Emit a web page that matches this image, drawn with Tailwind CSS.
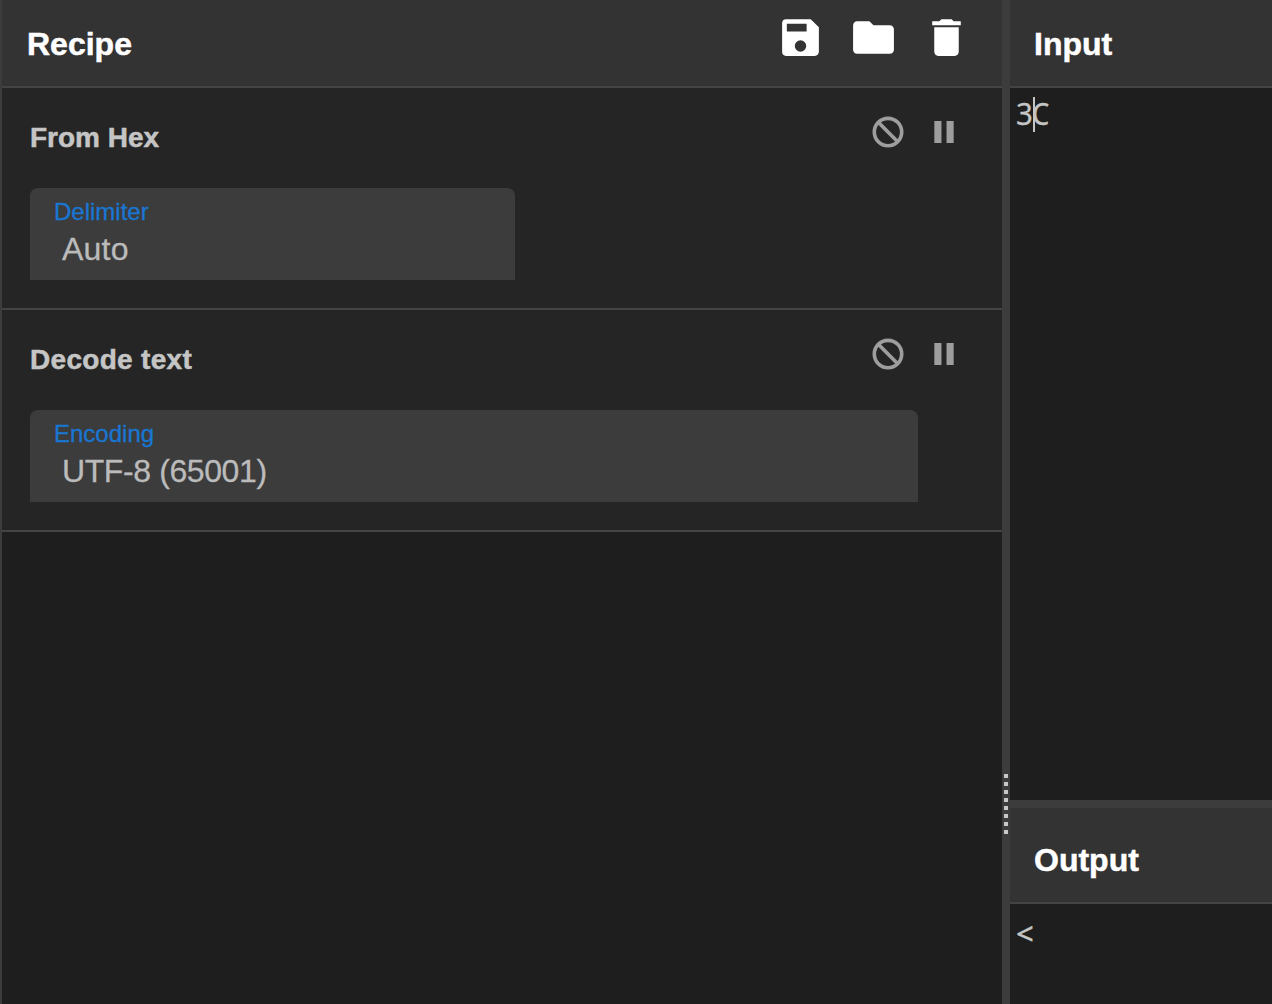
<!DOCTYPE html>
<html lang="en">
<head>
<meta charset="utf-8">
<title>Recipe</title>
<script src="https://cdn.jsdelivr.net/npm/@tailwindcss/browser@4"></script>
</head>
<body class="flex h-[1004px] w-[1272px] overflow-hidden bg-[#1e1e1e] font-['Liberation_Sans',Arial,sans-serif]">
  <main class="flex w-[1002px] shrink-0 flex-col border-l-2 border-[#3c3c3c]">
    <header class="flex h-[88px] shrink-0 items-start justify-between border-b-2 border-[#444] bg-[#333] pl-[25px]">
      <h1 class="pt-[25px] text-[32px] leading-[38px] font-bold text-white [-webkit-text-stroke:0.5px]">Recipe</h1>
      <div class="flex gap-6 pt-[13px] pr-[31.5px] text-white">
        <svg class="size-[49px]" viewBox="0 0 24 24" fill="currentColor"><path d="M17 3H5a2 2 0 0 0-2 2v14a2 2 0 0 0 2 2h14c1.1 0 2-.9 2-2V7l-4-4zm-5 16a2.8 2.8 0 1 1 0-5.600 2.800 2.800 0 0 1 0 5.600zm3-10H5.300V5.300H15V9z"/></svg>
        <svg class="size-[49px]" viewBox="0 0 24 24" fill="currentColor"><path d="M10 4H4c-1.100 0-1.990.9-1.990 2L2 18c0 1.100.9 2 2 2h16c1.100 0 2-.9 2-2V8c0-1.100-.9-2-2-2h-8l-2-2z"/></svg>
        <svg class="size-[49px]" viewBox="0 0 24 24" fill="currentColor"><path d="M6 19c0 1.100.9 2 2 2h8c1.100 0 2-.9 2-2V7H6v12zM19 4h-3.500l-1-1h-5l-1 1H5v2h14V4z"/></svg>
      </div>
    </header>

    <section class="h-[222px] shrink-0 border-b-2 border-[#444] bg-[#252525] pl-7">
      <div class="flex h-[100px] items-start justify-between">
        <h2 class="pt-[33.5px] text-[28px] leading-8 font-bold text-[#c5c5c5] [-webkit-text-stroke:0.5px]">From Hex</h2>
        <div class="flex gap-[18px] pt-[25px] pr-[39px] text-[#9e9e9e]">
          <svg class="size-[38px]" viewBox="0 0 24 24" fill="none" stroke="currentColor" stroke-width="2.300"><circle cx="12" cy="12" r="8.650"/><path d="M5.700 5.700l12.600 12.600"/></svg>
          <svg class="size-[38px]" viewBox="0 0 24 24" fill="currentColor"><path d="M5.900 5h4.500v14H5.900zM13.600 5h4.500v14h-4.500z"/></svg>
        </div>
      </div>
      <div class="h-[92px] w-[485px] rounded-t-lg bg-[#3c3c3c] pt-2.5 pl-6">
        <div class="text-2xl leading-7 text-[#1976d2] [-webkit-text-stroke:0.3px]">Delimiter</div>
        <div class="pt-[5px] pl-2 text-[32px] leading-9 tracking-[0.2px] text-[#bbb] [-webkit-text-stroke:0.3px]">Auto</div>
      </div>
    </section>

    <section class="h-[222px] shrink-0 border-b-2 border-[#444] bg-[#252525] pl-7">
      <div class="flex h-[100px] items-start justify-between">
        <h2 class="pt-[33.5px] text-[28px] leading-8 font-bold tracking-[0.3px] text-[#c5c5c5] [-webkit-text-stroke:0.5px]">Decode text</h2>
        <div class="flex gap-[18px] pt-[25px] pr-[39px] text-[#9e9e9e]">
          <svg class="size-[38px]" viewBox="0 0 24 24" fill="none" stroke="currentColor" stroke-width="2.300"><circle cx="12" cy="12" r="8.650"/><path d="M5.700 5.700l12.600 12.600"/></svg>
          <svg class="size-[38px]" viewBox="0 0 24 24" fill="currentColor"><path d="M5.900 5h4.500v14H5.900zM13.600 5h4.500v14h-4.500z"/></svg>
        </div>
      </div>
      <div class="h-[92px] w-[888px] rounded-t-lg bg-[#3c3c3c] pt-2.5 pl-6">
        <div class="text-2xl leading-7 text-[#1976d2] [-webkit-text-stroke:0.3px]">Encoding</div>
        <div class="pt-[5px] pl-2 text-[32px] leading-9 tracking-[-0.4px] text-[#bbb] [-webkit-text-stroke:0.3px]">UTF-8 (65001)</div>
      </div>
    </section>
  </main>

  <div class="flex w-2 shrink-0 justify-center bg-[#3c3c3c] pt-[774px]">
    <div class="flex flex-col gap-1">
      <i class="h-1 w-1 bg-[#c8c8c8]"></i><i class="h-1 w-1 bg-[#c8c8c8]"></i><i class="h-1 w-1 bg-[#c8c8c8]"></i><i class="h-1 w-1 bg-[#c8c8c8]"></i><i class="h-1 w-1 bg-[#c8c8c8]"></i><i class="h-1 w-1 bg-[#c8c8c8]"></i><i class="h-1 w-1 bg-[#c8c8c8]"></i><i class="h-1 w-1 bg-[#c8c8c8]"></i>
    </div>
  </div>

  <aside class="flex flex-1 flex-col">
    <section class="flex h-[800px] shrink-0 flex-col">
      <header class="h-[88px] shrink-0 border-b-2 border-[#444] bg-[#333] pt-[25px] pl-6 text-[32px] leading-[38px] font-bold text-white [-webkit-text-stroke:0.5px]">Input</header>
      <div class="flex pt-[9px] pl-1.5 font-['Noto_Sans',sans-serif] text-[31px] leading-[33px] text-[#c5c5c5] [-webkit-text-stroke:0.3px]">
        <span class="w-[17px] origin-left scale-x-95">3</span>
        <i class="h-[35px] w-0.5 bg-[#c5c5c5]"></i>
        <span class="-ml-[3px] origin-left scale-x-88">C</span>
      </div>
    </section>
    <div class="h-2 shrink-0 bg-[#3c3c3c]"></div>
    <section class="flex flex-1 flex-col">
      <header class="h-24 shrink-0 border-b-2 border-[#444] bg-[#333] pt-[33px] pl-6 text-[32px] leading-[38px] font-bold text-white [-webkit-text-stroke:0.5px]">Output</header>
      <div class="pt-3 pl-1.5 font-['Noto_Sans',sans-serif] text-[31px] leading-[34px] text-[#c5c5c5] [-webkit-text-stroke:0.4px]">&lt;</div>
    </section>
  </aside>
</body>
</html>
